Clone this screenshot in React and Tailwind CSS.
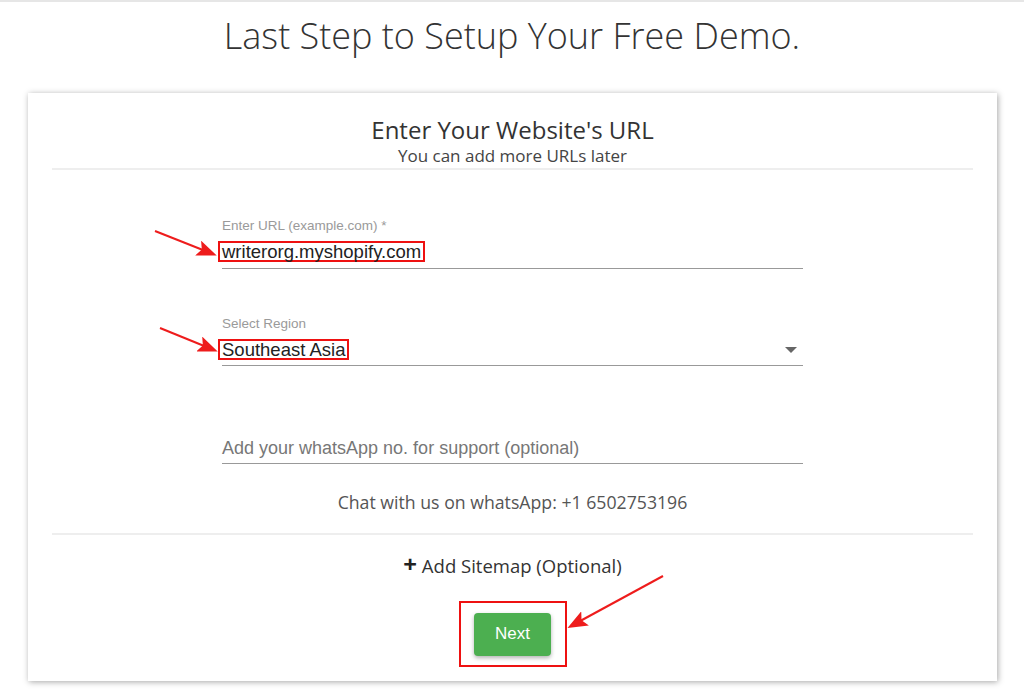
import React from "react";

const Arrow = ({ id, className, x1, y1, x2, y2 }) => (
  <svg className={className} width="120" height="80" viewBox="0 0 120 80" fill="none">
    <defs>
      <marker id={id} markerWidth="10" markerHeight="8" refX="8" refY="4" orient="auto">
        <path d="M0 0 L10 4 L0 8 L2 4 Z" fill="#ee1c1c" />
      </marker>
    </defs>
    <line x1={x1} y1={y1} x2={x2} y2={y2} stroke="#ee1c1c" strokeWidth="2" markerEnd={`url(#${id})`} />
  </svg>
);

const App = () => {
  return (
    <div className="relative w-[1024px] h-[695px] bg-white overflow-hidden border-t-2 border-[#e6e6e6]">
      {/* Page title */}
      <h1 className="text-center text-[36px] font-light text-[#333] pt-[10px] leading-[48px] font-['Open_Sans',sans-serif]">
        Last Step to Setup Your Free Demo.
      </h1>

      {/* Card */}
      <div className="ml-[28px] mt-[33px] w-[969px] h-[588px] bg-white shadow-[1px_1px_6px_rgba(0,0,0,0.35)] px-[24px] pt-[22px]">
        <div className="text-center font-['Open_Sans',sans-serif] text-[#333] pb-[1px] border-b-2 border-[#eeeeee]">
          <h2 className="text-[24px] leading-[30px]">Enter Your Website's URL</h2>
          <p className="text-[17px] leading-[22px] text-[#444]">You can add more URLs later</p>
        </div>

        <div className="w-[581px] mx-auto font-['Liberation_Sans',Arial,sans-serif]">
          {/* URL */}
          <div className="mt-[48px]">
            <p className="text-[13.5px] text-[#9a9a9a] leading-[16px]">Enter URL (example.com) *</p>
            <div className="border-b border-[#999] pt-[7px] pb-[3px]">
              <span className="inline-block text-[18.5px] leading-[17px] text-[#222] border-2 border-[#e11] px-[2px] -ml-[4px]">
                writerorg.myshopify.com
              </span>
            </div>
          </div>

          {/* Region */}
          <div className="mt-[47px]">
            <p className="text-[13.5px] text-[#9a9a9a] leading-[16px]">Select Region</p>
            <div className="border-b border-[#999] pt-[7px] pb-[5px] flex items-center justify-between">
              <span className="inline-block text-[18.5px] leading-[17px] text-[#222] border-2 border-[#e11] px-[2px] -ml-[4px]">
                Southeast Asia
              </span>
              <svg width="12" height="6" viewBox="0 0 12 6" className="mr-[6px]">
                <path d="M0 0 L12 0 L6 6 Z" fill="#666" />
              </svg>
            </div>
          </div>

          {/* WhatsApp */}
          <div className="mt-[71px] border-b border-[#999] pb-[4px]">
            <p className="text-[18px] leading-[22px] text-[#777]">Add your whatsApp no. for support (optional)</p>
          </div>
        </div>

        <p className="mt-[26px] text-center text-[17.7px] text-[#555] font-['Open_Sans',sans-serif] leading-[24px]">
          Chat with us on whatsApp: +1 6502753196
        </p>

        <div className="mt-[19px] border-t-2 border-[#eeeeee]" />

        <p className="mt-[19px] text-center text-[18.5px] text-[#333] font-['Open_Sans',sans-serif] leading-[24px]">
          <span className="font-bold text-[24px] leading-[20px] text-[#222]">+</span> Add Sitemap (Optional)
        </p>

        <div className="flex justify-center mt-[23px]">
          <div className="border-2 border-[#e11] w-[108px] h-[66px] flex items-center justify-center">
            <button className="w-[77px] h-[43px] rounded-[4px] bg-[#4caf50] text-white text-[17px] font-['Liberation_Sans',Arial,sans-serif] shadow-[0_2px_4px_rgba(0,0,0,0.3)]">
              Next
            </button>
          </div>
        </div>
      </div>

      {/* Annotation arrows */}
      <Arrow id="a1" className="absolute left-[150px] top-[222px]" x1={5} y1={7} x2={63} y2={30} />
      <Arrow id="a2" className="absolute left-[155px] top-[320px]" x1={5} y1={6} x2={59} y2={28} />
      <Arrow id="a3" className="absolute left-[560px] top-[565px]" x1={103} y1={9} x2={11} y2={59} />
    </div>
  );
};

export default App;
